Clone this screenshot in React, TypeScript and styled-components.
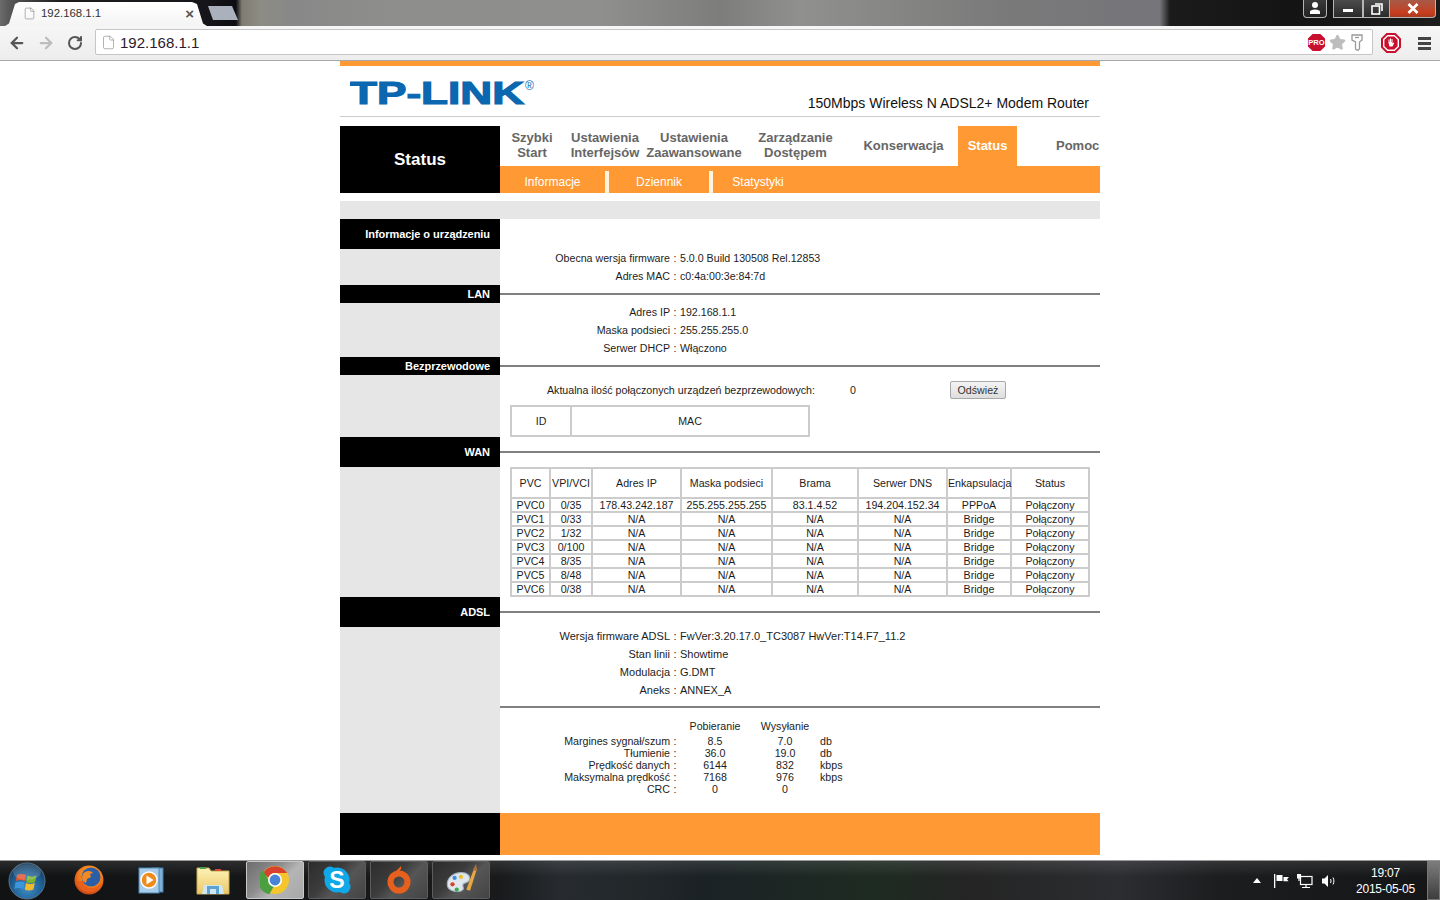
import React from "react";
import styled, { createGlobalStyle } from "styled-components";
import { ArrowLeft, ArrowRight, File, RotateCw, Star } from "lucide-react";

const GlobalStyle = createGlobalStyle`
  html, body {
    margin: 0;
    padding: 0;
    background: #ffffff;
    overflow: hidden;
  }
  body {
    font-family: "Liberation Sans", Arial, sans-serif;
    font-size: 10.65px;
    color: #1c1c1c;
  }
`;

const Screen = styled.div`
  width: 1440px;
  height: 900px;
  display: flex;
  flex-direction: column;
  overflow: hidden;
`;

/* browser frame */
const TabStrip = styled.div`
  height: 26px;
  flex: none;
  display: flex;
  background: linear-gradient(
    90deg,
    #6c6c6c 0,
    #5a5a5a 8px,
    #1d1d20 60px,
    #16161a 205px,
    #0e0e12 236px,
    #7f7d72 242px,
    #8d8c84 260px,
    #888 290px,
    #8e8e8c 400px,
    #8f8f8d 600px,
    #7d7d7b 720px,
    #90908e 800px,
    #7a7a7a 1000px,
    #75757a 1160px,
    #1b1b1b 1170px,
    #141414 1290px,
    #1c1c1c 1440px
  );
`;

const Tab = styled.div`
  width: 202px;
  height: 24px;
  margin: 2px 0 0 5px;
  padding: 0 13px 2px 18px;
  box-sizing: border-box;
  display: flex;
  align-items: center;
  gap: 5px;
  background: linear-gradient(#ffffff, #f4f4f4);
  clip-path: polygon(0 100%, 4px 90%, 10px 8%, 14px 0, 187px 0, 192px 8%, 198px 90%, 202px 100%);
  color: #333;
  font-size: 11.4px;
  svg {
    color: #8a8a8a;
  }
`;

const TabTitle = styled.span`
  flex: 1;
`;

const TabClose = styled.span`
  font-size: 15px;
  font-weight: 700;
  color: #555;
`;

const NewTab = styled.div`
  width: 30px;
  height: 14px;
  margin: 6px 0 0 1px;
  background: #aab0bc;
  clip-path: polygon(0 0, 24px 0, 30px 100%, 5px 100%);
`;

const WindowControls = styled.div`
  margin-left: auto;
  margin-right: 4px;
  display: flex;
  align-items: flex-start;
  height: 18px;
`;

const UserButton = styled.div`
  width: 24px;
  height: 18px;
  margin-right: 6px;
  box-sizing: border-box;
  border: 1px solid #b5b5b5;
  border-top: 0;
  border-radius: 0 0 4px 4px;
  display: flex;
  justify-content: center;
  background: linear-gradient(#3a3a3a, #222);
`;

const WinButton = styled.div<{ $w: number; $close?: boolean }>`
  width: ${(p) => p.$w}px;
  height: 18px;
  box-sizing: border-box;
  border: 1px solid #b5b5b5;
  border-top: 0;
  border-left-width: ${(p) => (p.$close ? 0 : 1)}px;
  display: flex;
  align-items: center;
  justify-content: center;
  color: #fff;
  background: ${(p) =>
    p.$close
      ? "linear-gradient(#a85a48 0, #b84a30 45%, #c93d1c 75%, #a83a20 100%)"
      : "linear-gradient(#4c4c4c, #2a2a2a)"};
  &:first-child {
    border-radius: 0 0 0 4px;
  }
  &:last-child {
    border-radius: 0 0 4px 0;
  }
`;

const MinGlyph = styled.div`
  width: 10px;
  height: 3px;
  margin-top: 4px;
  background: #fff;
`;

const Toolbar = styled.div`
  height: 35px;
  flex: none;
  box-sizing: border-box;
  display: flex;
  align-items: flex-start;
  background: linear-gradient(#f6f6f6, #ededed);
  border-bottom: 1px solid #a9a9a9;
`;

const NavIcon = styled.div<{ $w: number; $color: string }>`
  width: ${(p) => p.$w}px;
  height: 33px;
  flex: none;
  display: flex;
  align-items: center;
  justify-content: center;
  color: ${(p) => p.$color};
`;

const Omnibox = styled.div`
  width: 1278px;
  height: 26px;
  margin: 3px 0 0 4px;
  flex: none;
  box-sizing: border-box;
  padding: 0 6px 0 5px;
  display: flex;
  align-items: center;
  gap: 4px;
  background: #fff;
  border: 1px solid #c6c6c6;
  border-radius: 2px;
  svg.page {
    color: #999;
  }
`;

const UrlText = styled.span`
  flex: 1;
  font-size: 15px;
  color: #2a1a2a;
`;

const OmniIcons = styled.div`
  display: flex;
  align-items: center;
  gap: 5px;
  margin-right: 3px;
`;

const BookmarkStar = styled(Star)`
  margin-left: -2px;
`;

const Burger = styled.div`
  margin: 11px 0 0 9px;
  width: 13px;
  height: 13px;
  border-top: 3px solid #444;
  border-bottom: 3px solid #444;
  box-sizing: border-box;
  &::after {
    content: "";
    display: block;
    height: 3px;
    margin-top: 2px;
    background: #444;
  }
`;

/* router page */
const Content = styled.main`
  flex: 1;
  overflow: hidden;
  background: #fff;
`;

const RouterPage = styled.div`
  width: 760px;
  margin: 0 auto;
`;

const Header = styled.header`
  height: 41px;
  border-top: 5px solid #ff9933;
  border-bottom: 1px solid #cccccc;
  margin-bottom: 9px;
  padding: 9px 11px 0 10px;
  display: flex;
  justify-content: space-between;
`;

const Model = styled.div`
  align-self: flex-end;
  font-size: 14px;
  line-height: 16px;
  margin-bottom: 5px;
  color: #111;
`;

const NavRow = styled.nav`
  display: grid;
  grid-template-columns: 160px 600px;
  height: 67px;
`;

const NavTitle = styled.div`
  background: #000;
  color: #fff;
  font-size: 17px;
  font-weight: 700;
  display: flex;
  align-items: center;
  justify-content: center;
`;

const NavBody = styled.div`
  display: flex;
  flex-direction: column;
`;

const Tabs = styled.div`
  height: 40px;
  display: flex;
`;

const MenuTab = styled.div<{ $w: number; $active?: boolean; $left?: number }>`
  width: ${(p) => p.$w}px;
  flex: none;
  box-sizing: border-box;
  display: flex;
  align-items: center;
  justify-content: ${(p) => (p.$left ? "flex-start" : "center")};
  padding-left: ${(p) => p.$left ?? 0}px;
  padding-bottom: 2px;
  text-align: center;
  font-size: 13px;
  line-height: 15px;
  font-weight: 700;
  white-space: nowrap;
  color: ${(p) => (p.$active ? "#fff" : "#666666")};
  background: ${(p) => (p.$active ? "#ff9933" : "transparent")};
`;

const SubTabs = styled.div`
  height: 27px;
  display: flex;
  background: #ff9933;
`;

const SubTab = styled.div<{ $w: number }>`
  width: ${(p) => p.$w}px;
  display: flex;
  align-items: center;
  justify-content: center;
  padding-top: 4px;
  box-sizing: border-box;
  color: #fff;
  font-size: 12px;
`;

const SubDivider = styled.div`
  width: 4px;
  height: 22px;
  align-self: flex-end;
  background: #fff4e2;
`;

const GrayBar = styled.div`
  height: 18px;
  margin-top: 8px;
  background: #e6e6e6;
`;

const Section = styled.section<{ $head: number }>`
  display: grid;
  grid-template-columns: 160px 600px;
  grid-template-rows: ${(p) => p.$head}px auto;
`;

const SectionTitle = styled.div`
  background: #000;
  color: #fff;
  font-size: 11px;
  font-weight: 700;
  letter-spacing: -0.05px;
  display: flex;
  align-items: center;
  justify-content: flex-end;
  padding-right: 10px;
`;

const SectionHeadRule = styled.div`
  display: flex;
  align-items: center;
`;

const Rule = styled.div<{ $gap?: number }>`
  width: 100%;
  height: 2px;
  margin-top: ${(p) => p.$gap ?? 0}px;
  background: #808080;
`;

const SectionFill = styled.div`
  background: #e6e6e6;
`;

const SectionBody = styled.div`
  min-width: 0;
`;

const AdslInfo = styled.div`
  font-size: 11px;
`;

const InfoRow = styled.div`
  display: grid;
  grid-template-columns: 170px 10px 1fr;
  height: 18px;
  line-height: 18px;
`;

const InfoLabel = styled.div`
  text-align: right;
`;

const InfoColon = styled.div`
  text-align: center;
`;

const CountRow = styled.div`
  height: 30px;
  padding: 6px 0 0 47px;
  box-sizing: border-box;
  display: flex;
  align-items: flex-start;
  line-height: 18px;
`;

const CountLabel = styled.div`
  width: 303px;
  flex: none;
`;

const CountValue = styled.div`
  width: 100px;
  flex: none;
`;

const RefreshButton = styled.button`
  width: 56px;
  height: 18px;
  padding: 0;
  box-sizing: border-box;
  font: 10.65px "Liberation Sans", Arial, sans-serif;
  color: #333;
  background: linear-gradient(#f4f4f4, #dedede);
  border: 1px solid #a8a8a8;
  border-radius: 2px;
`;

const Table = styled.table<{ $w: number }>`
  width: ${(p) => p.$w}px;
  margin-left: 10px;
  table-layout: fixed;
  border-collapse: separate;
  border-spacing: 0;
  border: 1px solid #cccccc;
  font-size: 10.65px;
`;

const Th = styled.th<{ $h: number }>`
  height: ${(p) => p.$h}px;
  padding: 0;
  box-sizing: border-box;
  border: 1px solid #cccccc;
  font-weight: 400;
  text-align: center;
  white-space: nowrap;
`;

const Td = styled.td`
  height: 14px;
  padding: 0;
  box-sizing: border-box;
  border: 1px solid #cccccc;
  line-height: 12px;
  text-align: center;
  white-space: nowrap;
`;

const Stats = styled.div`
  display: grid;
  grid-template-columns: 170px 10px 70px 70px 1fr;
  grid-template-rows: 15px;
  grid-auto-rows: 12px;
  line-height: 12px;
  padding: 12px 0 18px;
`;

const StatCell = styled.div<{ $center?: boolean; $right?: boolean }>`
  text-align: ${(p) => (p.$center ? "center" : p.$right ? "right" : "left")};
`;

const Footer = styled.footer`
  display: grid;
  grid-template-columns: 160px 600px;
  height: 42px;
`;

const FooterLeft = styled.div`
  background: #000;
`;

const FooterRight = styled.div`
  background: #ff9933;
`;

/* windows taskbar */
const Taskbar = styled.div`
  height: 40px;
  flex: none;
  box-sizing: border-box;
  display: flex;
  border-top: 1px solid #9a9a9a;
  background:
    linear-gradient(rgba(255, 255, 255, 0.1), rgba(0, 0, 0, 0) 40%),
    linear-gradient(90deg, #101214 0, #181a1c 500px, #272b2f 560px, #22272a 640px, #1b2225 700px, #1e2b22 880px, #242424 960px, #2b2d30 1120px, #1b1d1f 1220px, #141516 1440px);
`;

const Orb = styled.div`
  width: 58px;
  flex: none;
  box-sizing: border-box;
  padding-right: 4px;
  display: flex;
  align-items: center;
  justify-content: center;
`;

const TaskItem = styled.div<{ $state?: "active" | "open" }>`
  width: 58px;
  height: 38px;
  margin: 0 2px;
  flex: none;
  box-sizing: border-box;
  display: flex;
  align-items: center;
  justify-content: center;
  border: 1px solid ${(p) => (p.$state === "active" ? "#c8c8c8" : p.$state === "open" ? "#5c5c5c" : "transparent")};
  border-radius: 2px;
  background: ${(p) =>
    p.$state === "active"
      ? "linear-gradient(135deg, #6d6d6d 0, #8e8e8e 40%, #b5b5b5 60%, #a8a8a8 100%)"
      : p.$state === "open"
        ? "linear-gradient(135deg, #2c2c2c 0, #3c3c3c 40%, #565656 60%, #434343 100%)"
        : "transparent"};
`;

const Tray = styled.div`
  margin-left: auto;
  display: flex;
  align-items: center;
  color: #fff;
`;

const TrayIcon = styled.div<{ $w: number }>`
  width: ${(p) => p.$w}px;
  display: flex;
  justify-content: center;
`;

const Clock = styled.div`
  width: 73px;
  text-align: center;
  font-size: 12px;
  line-height: 16px;
  letter-spacing: -0.25px;
  margin-left: 8px;
`;

const ShowDesktop = styled.div`
  width: 13px;
  height: 39px;
  margin-left: 5px;
  box-sizing: border-box;
  border: 1px solid #777;
  background: linear-gradient(#7c7c7c, #3d3d3d);
`;

const TrayArrow = styled.div`
  width: 0;
  height: 0;
  border-left: 4px solid transparent;
  border-right: 4px solid transparent;
  border-bottom: 5px solid #fff;
`;

const Logo = () => (
  <svg width="190" height="40" viewBox="0 0 190 40">
    <text
      x="0"
      y="29"
      fontFamily="Liberation Sans, Arial, sans-serif"
      fontWeight="700"
      fontSize="32"
      fill="#0a67b0"
      stroke="#0a67b0"
      strokeWidth="1.2"
      textLength="174"
      lengthAdjust="spacingAndGlyphs"
    >
      TP-LINK
    </text>
    <text x="175" y="15" fontFamily="Liberation Sans, Arial, sans-serif" fontSize="12" fill="#0a67b0">
      ®
    </text>
  </svg>
);

const octagon = "5.9,1 14.1,1 19,5.9 19,14.1 14.1,19 5.9,19 1,14.1 1,5.9";

const ProBadge = () => (
  <svg width="19" height="19" viewBox="0 0 20 20">
    <polygon points={octagon} fill="#c8102e" />
    <text x="10" y="12.8" textAnchor="middle" fontFamily="Liberation Sans, sans-serif" fontSize="8" fontWeight="700" fill="#fff">
      PRO
    </text>
  </svg>
);

const KeyIcon = () => (
  <svg width="12" height="17" viewBox="0 0 12 17" fill="none" stroke="#999" strokeWidth="1.3">
    <path d="M1 1h10v5l-2.5 2v7l-2 1.5L4.5 15V8L1 6z" />
    <path d="M4 3.5h4" />
  </svg>
);

const AdblockIcon = () => (
  <svg width="20" height="20" viewBox="0 0 20 20">
    <polygon points={octagon} fill="#fff" stroke="#c8102e" strokeWidth="2" />
    <polygon points="6.8,3.4 13.2,3.4 16.6,6.8 16.6,13.2 13.2,16.6 6.8,16.6 3.4,13.2 3.4,6.8" fill="#c8102e" />
    <path d="M7.5 10V6.5h1V9h.5V5.5h1V9h.5V6h1v4.5l1-1 .7.5-1.7 3.5H8.5z" fill="#fff" />
  </svg>
);

const UserGlyph = () => (
  <svg width="14" height="15" viewBox="0 0 14 15" fill="#fff">
    <circle cx="7" cy="5" r="3" />
    <path d="M2 14v-2.5c0-1 2-2 5-2s5 1 5 2V14z" />
  </svg>
);

const RestoreGlyph = () => (
  <svg width="12" height="13" viewBox="0 0 12 13" fill="none" stroke="#fff" strokeWidth="1.6">
    <rect x="1" y="4" width="7.5" height="8" />
    <path d="M4 2h7v7" />
  </svg>
);

const CloseGlyph = () => (
  <svg width="12" height="11" viewBox="0 0 12 11" stroke="#fff" strokeWidth="2.6">
    <path d="M1.5 1l9 9M10.5 1l-9 9" />
  </svg>
);

const WindowsOrb = () => (
  <svg width="38" height="38" viewBox="0 0 38 38">
    <defs>
      <radialGradient id="orbFill" cx="50%" cy="70%" r="65%">
        <stop offset="0" stopColor="#3f8ec8" />
        <stop offset="0.7" stopColor="#1c5a8e" />
        <stop offset="1" stopColor="#123a5c" />
      </radialGradient>
    </defs>
    <circle cx="19" cy="19" r="18" fill="url(#orbFill)" stroke="#5b7488" />
    <path d="M9 13c3-1.5 6-1.5 9 0l-1.2 6c-3-1.4-6-1.4-9 0z" fill="#e2552e" />
    <path d="M19.5 13.5c3 1.5 6 1.5 9 0L27 20c-3 1.4-6 1.4-8.800 0z" fill="#7ab52d" />
    <path d="M7.500 20.500c3-1.400 6-1.400 9 0L15.300 27c-3-1.400-6-1.400-9 0z" fill="#3d96dc" />
    <path d="M18 21c3 1.400 6 1.400 8.800 0l-1.400 6.500c-3 1.400-6 1.400-8.600 0z" fill="#f2bb2c" />
    <ellipse cx="19" cy="10" rx="14" ry="8" fill="#fff" opacity="0.16" />
  </svg>
);

const FirefoxIcon = () => (
  <svg width="32" height="32" viewBox="0 0 32 32">
    <defs>
      <radialGradient id="foxFill" cx="55%" cy="35%" r="70%">
        <stop offset="0" stopColor="#ffc03a" />
        <stop offset="0.6" stopColor="#f0761c" />
        <stop offset="1" stopColor="#c23a12" />
      </radialGradient>
    </defs>
    <circle cx="16" cy="16" r="14.500" fill="url(#foxFill)" />
    <circle cx="18" cy="13" r="9.500" fill="#2a5fa8" />
    <path d="M12 8c3-2 7-1 8 1l-3 1 1 3-4 2-1 4c-3-1-4-3-4-5 0-3 1-5 3-6z" fill="#f08a24" />
    <path d="M4 17c1 7 7 11 13 11 6 0 11-4 12-10-3 5-8 7-12 6-5-1-7-4-7-7-3 0-5 0-6 0z" fill="#e8601a" />
  </svg>
);

const MediaIcon = () => (
  <svg width="28" height="30" viewBox="0 0 28 30">
    <rect x="15" y="3" width="11" height="24" fill="#7fb0d8" stroke="#4a7fa8" />
    <rect x="2" y="3" width="20" height="25" fill="#a8cdea" stroke="#4f86b0" />
    <circle cx="12" cy="15" r="8" fill="#f08a1c" stroke="#fff" strokeWidth="1.500" />
    <polygon points="9.500,10.500 16.500,15 9.500,19.500" fill="#fff" />
  </svg>
);

const FolderIcon = () => (
  <svg width="34" height="32" viewBox="0 0 34 32">
    <defs>
      <linearGradient id="folderFill" x1="0" y1="0" x2="0" y2="1">
        <stop offset="0" stopColor="#fff3b8" />
        <stop offset="1" stopColor="#eac766" />
      </linearGradient>
    </defs>
    <path d="M1 4h12l2 3h18v23H1z" fill="url(#folderFill)" stroke="#c8a850" />
    <rect x="4" y="3" width="6" height="2" fill="#4aa04a" />
    <rect x="19" y="5" width="6" height="2" fill="#d84a3a" />
    <path d="M8 21h18l2 9H6z" fill="#cfe6f5" />
    <path d="M11 22h12v8h-3v-5h-6v5h-3z" fill="#5ea3d0" />
  </svg>
);

const ChromeIcon = () => (
  <svg width="30" height="30" viewBox="0 0 30 30">
    <circle cx="15" cy="15" r="14" fill="#f4c52c" />
    <path d="M3 8a14 14 0 0 1 24.100 0H15a7 7 0 0 0-6.600 4.700z" fill="#d9412f" />
    <path d="M2.900 8L9 18.500a7 7 0 0 0 6 3.500l-5.700 10A14 14 0 0 1 2.900 8z" fill="#4a9f3e" transform="translate(0 -2.800)" />
    <circle cx="15" cy="15" r="7" fill="#fff" />
    <circle cx="15" cy="15" r="5.400" fill="#4a84d8" />
  </svg>
);

const SkypeIcon = () => (
  <svg width="30" height="30" viewBox="0 0 30 30">
    <circle cx="15" cy="15" r="12.500" fill="#10a8e8" />
    <circle cx="8" cy="8" r="6.500" fill="#10a8e8" />
    <circle cx="22" cy="22" r="6.500" fill="#10a8e8" />
    <text x="15" y="23" textAnchor="middle" fontFamily="Liberation Sans, sans-serif" fontWeight="700" fontSize="23" fill="#fff">
      S
    </text>
  </svg>
);

const OriginIcon = () => (
  <svg width="26" height="30" viewBox="0 0 26 30">
    <path d="M15 1c1 3-1 4.500-2.500 6H9z" fill="#e8601e" />
    <circle cx="13" cy="17" r="8.500" fill="none" stroke="#e8601e" strokeWidth="6" />
  </svg>
);

const PaintIcon = () => (
  <svg width="34" height="34" viewBox="0 0 32 32">
    <path d="M3 20c0-7 7-11 13-11 6 0 9 3 8 7-1 3-5 2-6 4-1 2 1 3 0 5-2 3-15 3-15-5z" fill="#dfe6ec" stroke="#9fb0bc" />
    <circle cx="10" cy="14" r="2" fill="#3f8fd8" />
    <circle cx="16" cy="13" r="2" fill="#e8c22c" />
    <circle cx="8" cy="20" r="2" fill="#d8402c" />
    <circle cx="12" cy="25" r="2" fill="#3fa84a" />
    <path d="M21 25L28 6l2.500 1-6 19z" fill="#e8a840" />
    <path d="M27 7l3-6 1.500 6.500z" fill="#b0703a" />
  </svg>
);

const FlagIcon = () => (
  <svg width="15" height="14" viewBox="0 0 15 14" fill="#fff">
    <rect x="0" y="0" width="1.300" height="14" />
    <path d="M2.500 1h6v6h-6z" />
    <path d="M9.500 3H15l-2 2.300 1.500 2H9.500z" />
  </svg>
);

const NetworkIcon = () => (
  <svg width="16" height="15" viewBox="0 0 16 15" fill="none" stroke="#fff" strokeWidth="1.200">
    <rect x="3.500" y="3.500" width="11.500" height="8" />
    <path d="M9 12v2M5 14.500h8" />
    <path d="M0.500 1v4h3V1M2 5v3" fill="#fff" />
  </svg>
);

const SoundIcon = () => (
  <svg width="16" height="14" viewBox="0 0 16 14" fill="none" stroke="#fff">
    <path d="M1 4.500h2.500L7 1v12L3.500 9.500H1z" fill="#fff" stroke="none" />
    <path d="M9.500 5c.7 1.300.7 2.700 0 4M12 3.500c1.200 2.300 1.200 4.700 0 7" />
  </svg>
);

const wanColumns = [39, 42, 89, 91, 86, 89, 64, 78];
const wanHeads = ["PVC", "VPI/VCI", "Adres IP", "Maska podsieci", "Brama", "Serwer DNS", "Enkapsulacja", "Status"];
const wanRows = [
  ["PVC0", "0/35", "178.43.242.187", "255.255.255.255", "83.1.4.52", "194.204.152.34", "PPPoA", "Połączony"],
  ["PVC1", "0/33", "N/A", "N/A", "N/A", "N/A", "Bridge", "Połączony"],
  ["PVC2", "1/32", "N/A", "N/A", "N/A", "N/A", "Bridge", "Połączony"],
  ["PVC3", "0/100", "N/A", "N/A", "N/A", "N/A", "Bridge", "Połączony"],
  ["PVC4", "8/35", "N/A", "N/A", "N/A", "N/A", "Bridge", "Połączony"],
  ["PVC5", "8/48", "N/A", "N/A", "N/A", "N/A", "Bridge", "Połączony"],
  ["PVC6", "0/38", "N/A", "N/A", "N/A", "N/A", "Bridge", "Połączony"],
];

const stats = [
  ["Margines sygnał/szum", "8.5", "7.0", "db"],
  ["Tłumienie", "36.0", "19.0", "db"],
  ["Prędkość danych", "6144", "832", "kbps"],
  ["Maksymalna prędkość", "7168", "976", "kbps"],
  ["CRC", "0", "0", ""],
];

const Info = ({ label, value }: { label: string; value: string }) => (
  <InfoRow>
    <InfoLabel>{label}</InfoLabel>
    <InfoColon>:</InfoColon>
    <div>{value}</div>
  </InfoRow>
);

const App = () => {
  return (
    <Screen>
      <GlobalStyle />
      <TabStrip>
        <Tab>
          <File size={13} strokeWidth={1.2} />
          <TabTitle>192.168.1.1</TabTitle>
          <TabClose>×</TabClose>
        </Tab>
        <NewTab />
        <WindowControls>
          <UserButton>
            <UserGlyph />
          </UserButton>
          <WinButton $w={30}>
            <MinGlyph />
          </WinButton>
          <WinButton $w={27}>
            <RestoreGlyph />
          </WinButton>
          <WinButton $w={46} $close>
            <CloseGlyph />
          </WinButton>
        </WindowControls>
      </TabStrip>

      <Toolbar>
        <NavIcon $w={33} $color="#555">
          <ArrowLeft size={18} strokeWidth={3} />
        </NavIcon>
        <NavIcon $w={26} $color="#bdbdbd">
          <ArrowRight size={18} strokeWidth={3} />
        </NavIcon>
        <NavIcon $w={32} $color="#555">
          <RotateCw size={16} strokeWidth={3} />
        </NavIcon>
        <Omnibox>
          <File className="page" size={15} strokeWidth={1.2} />
          <UrlText>192.168.1.1</UrlText>
          <OmniIcons>
            <ProBadge />
            <BookmarkStar size={17} fill="#bdbdbd" stroke="#bdbdbd" />
            <KeyIcon />
          </OmniIcons>
        </Omnibox>
        <NavIcon $w={36} $color="#c8102e">
          <AdblockIcon />
        </NavIcon>
        <Burger />
      </Toolbar>

      <Content>
        <RouterPage>
          <Header>
            <Logo />
            <Model>150Mbps Wireless N ADSL2+ Modem Router</Model>
          </Header>

          <NavRow>
            <NavTitle>Status</NavTitle>
            <NavBody>
              <Tabs>
                <MenuTab $w={64}>
                  Szybki
                  <br />
                  Start
                </MenuTab>
                <MenuTab $w={82}>
                  Ustawienia
                  <br />
                  Interfejsów
                </MenuTab>
                <MenuTab $w={96}>
                  Ustawienia
                  <br />
                  Zaawansowane
                </MenuTab>
                <MenuTab $w={107}>
                  Zarządzanie
                  <br />
                  Dostępem
                </MenuTab>
                <MenuTab $w={109}>Konserwacja</MenuTab>
                <MenuTab $w={59} $active>
                  Status
                </MenuTab>
                <MenuTab $w={83} $left={39}>
                  Pomoc
                </MenuTab>
              </Tabs>
              <SubTabs>
                <SubTab $w={105}>Informacje</SubTab>
                <SubDivider />
                <SubTab $w={100}>Dziennik</SubTab>
                <SubDivider />
                <SubTab $w={90}>Statystyki</SubTab>
              </SubTabs>
            </NavBody>
          </NavRow>

          <GrayBar />

          <Section $head={30}>
            <SectionTitle>Informacje o urządzeniu</SectionTitle>
            <SectionHeadRule />
            <SectionFill />
            <SectionBody>
              <Info label="Obecna wersja firmware" value="5.0.0 Build 130508 Rel.12853" />
              <Info label="Adres MAC" value="c0:4a:00:3e:84:7d" />
            </SectionBody>
          </Section>

          <Section $head={18}>
            <SectionTitle>LAN</SectionTitle>
            <SectionHeadRule>
              <Rule />
            </SectionHeadRule>
            <SectionFill />
            <SectionBody>
              <Info label="Adres IP" value="192.168.1.1" />
              <Info label="Maska podsieci" value="255.255.255.0" />
              <Info label="Serwer DHCP" value="Włączono" />
            </SectionBody>
          </Section>

          <Section $head={18}>
            <SectionTitle>Bezprzewodowe</SectionTitle>
            <SectionHeadRule>
              <Rule />
            </SectionHeadRule>
            <SectionFill />
            <SectionBody>
              <CountRow>
                <CountLabel>Aktualna ilość połączonych urządzeń bezprzewodowych:</CountLabel>
                <CountValue>0</CountValue>
                <RefreshButton>Odśwież</RefreshButton>
              </CountRow>
              <Table $w={300}>
                <colgroup>
                  <col width={60} />
                  <col width={238} />
                </colgroup>
                <thead>
                  <tr>
                    <Th $h={30}>ID</Th>
                    <Th $h={30}>MAC</Th>
                  </tr>
                </thead>
              </Table>
            </SectionBody>
          </Section>

          <Section $head={30}>
            <SectionTitle>WAN</SectionTitle>
            <SectionHeadRule>
              <Rule />
            </SectionHeadRule>
            <SectionFill />
            <SectionBody>
              <Table $w={580}>
                <colgroup>
                  {wanColumns.map((w, i) => (
                    <col key={i} width={w} />
                  ))}
                </colgroup>
                <thead>
                  <tr>
                    {wanHeads.map((h) => (
                      <Th key={h} $h={30}>
                        {h}
                      </Th>
                    ))}
                  </tr>
                </thead>
                <tbody>
                  {wanRows.map((row) => (
                    <tr key={row[0]}>
                      {row.map((cell, i) => (
                        <Td key={i}>{cell}</Td>
                      ))}
                    </tr>
                  ))}
                </tbody>
              </Table>
            </SectionBody>
          </Section>

          <Section $head={30}>
            <SectionTitle>ADSL</SectionTitle>
            <SectionHeadRule>
              <Rule />
            </SectionHeadRule>
            <SectionFill />
            <SectionBody>
              <AdslInfo>
                <Info label="Wersja firmware ADSL" value="FwVer:3.20.17.0_TC3087 HwVer:T14.F7_11.2" />
                <Info label="Stan linii" value="Showtime" />
                <Info label="Modulacja" value="G.DMT" />
                <Info label="Aneks" value="ANNEX_A" />
              </AdslInfo>
              <Rule $gap={7} />
              <Stats>
                <StatCell />
                <StatCell />
                <StatCell $center>Pobieranie</StatCell>
                <StatCell $center>Wysyłanie</StatCell>
                <StatCell />
                {stats.map((row) => (
                  <React.Fragment key={row[0]}>
                    <StatCell $right>{row[0]}</StatCell>
                    <InfoColon>:</InfoColon>
                    <StatCell $center>{row[1]}</StatCell>
                    <StatCell $center>{row[2]}</StatCell>
                    <StatCell>{row[3]}</StatCell>
                  </React.Fragment>
                ))}
              </Stats>
            </SectionBody>
          </Section>

          <Footer>
            <FooterLeft />
            <FooterRight />
          </Footer>
        </RouterPage>
      </Content>

      <Taskbar>
        <Orb>
          <WindowsOrb />
        </Orb>
        <TaskItem>
          <FirefoxIcon />
        </TaskItem>
        <TaskItem>
          <MediaIcon />
        </TaskItem>
        <TaskItem>
          <FolderIcon />
        </TaskItem>
        <TaskItem $state="active">
          <ChromeIcon />
        </TaskItem>
        <TaskItem $state="open">
          <SkypeIcon />
        </TaskItem>
        <TaskItem $state="open">
          <OriginIcon />
        </TaskItem>
        <TaskItem $state="open">
          <PaintIcon />
        </TaskItem>
        <Tray>
          <TrayIcon $w={24}>
            <TrayArrow />
          </TrayIcon>
          <TrayIcon $w={24}>
            <FlagIcon />
          </TrayIcon>
          <TrayIcon $w={24}>
            <NetworkIcon />
          </TrayIcon>
          <TrayIcon $w={24}>
            <SoundIcon />
          </TrayIcon>
          <Clock>
            19:07
            <br />
            2015-05-05
          </Clock>
          <ShowDesktop />
        </Tray>
      </Taskbar>
    </Screen>
  );
};

export default App;
